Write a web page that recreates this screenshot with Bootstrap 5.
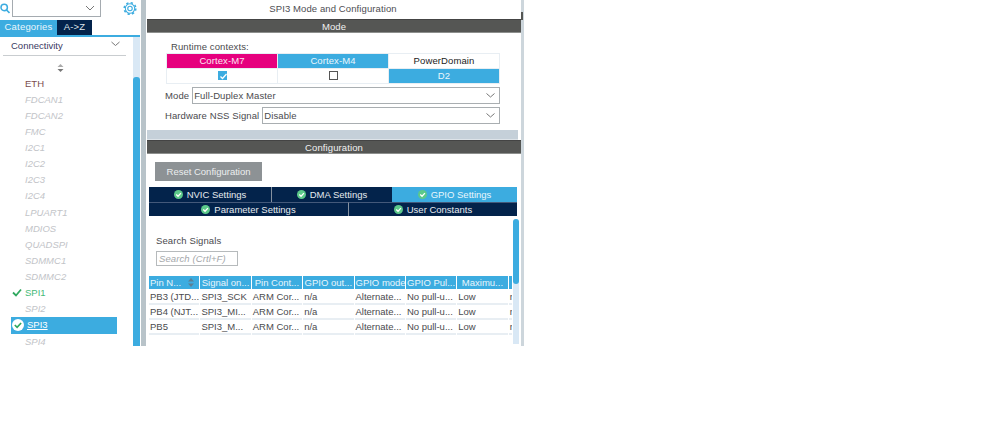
<!DOCTYPE html>
<html lang="en"><head><meta charset="utf-8"><title>SPI3 Mode and Configuration</title>
<link href="https://cdn.jsdelivr.net/npm/bootstrap@5.3.0/dist/css/bootstrap.min.css" rel="stylesheet">
<style>
html,body{background:#fff;margin:0}
body{font-family:"Liberation Sans",Arial,sans-serif;font-size:9.5px;color:#4a4a4e;line-height:1.2;letter-spacing:.1px}
.cube-app{width:524px;height:346px;overflow:hidden;background:#fff}
.side-pane{width:141px;flex:none;height:346px}
.side-top{height:20px;padding-bottom:3px}
.mag{width:10px;margin-top:3px;flex:none}
.combo{width:89px;height:17px;margin:0 0 0 2px;border:1px solid #a5abb0;border-top:0;background:#fff}
.gear{margin-left:22px;margin-top:1px}
.cat-tabs{height:17px;border-bottom:2px solid #3cace0;flex:none;width:140px}
.cat-on{width:57px;height:15px;background:#3cace0;color:#eaf6fc;text-align:center;line-height:14px;letter-spacing:.2px}
.cat-off{width:35px;height:15px;background:#03234b;color:#dfe5ea;text-align:center;line-height:14px}
.side-body{min-height:0;flex:1}
.side-list{width:133px;flex:none}
.group-head{margin:0 7px 0 3px;height:19px;border-bottom:1px solid #c9cdd0;padding:3px 6px 0 8px;color:#39395f;letter-spacing:0}
.sort-mark{height:19.5px;padding-top:8px;padding-left:57px;flex:none}
.ip-list{padding:0;margin:0;list-style:none}
.ip-item{height:16.13px;line-height:15px;padding-left:25px;color:#c2c4c8;font-style:italic;position:relative;letter-spacing:0}
.ip-item.ip-plain{color:#7b4c4f;font-style:normal}
.ip-item.ip-ok{color:#45b978;font-style:normal}
.ip-item.ip-sel{color:#fff;font-style:normal;background:#3cace0;margin-left:11px;width:106px;padding-left:16px;text-decoration:underline;height:17px}
.tick{position:absolute;left:12px;top:3px}
.tick-round{position:absolute;left:1px;top:2px}
.vbar{width:7px;flex:none;background:#d9e8f5;display:flex;flex-direction:column}
.vbar-gap{flex:none;height:40px}
.vbar-thumb{flex:1;background:#3cace0;border-radius:3px 3px 0 0}
.side-rule{width:5px;flex:none;background:#b8c3c9;margin-left:0;height:346px}
.main-pane{width:374px;flex:none;height:346px;margin-left:1px}
.pane-title{height:19px;text-align:center;line-height:17px;color:#4d4d52;padding-right:2px}
.dark-bar{background:#555654;color:#f1f1f1;text-align:center;height:14px;line-height:13px;border-top:1px solid #444;border-bottom:1px solid #8d8f8d}
.mode-box{height:97px;padding-left:19px}
.ctx-label{height:20px;padding:8px 0 0 5px;line-height:12px}
.ctx-table{width:334px;table-layout:fixed;border-collapse:collapse;margin:0;text-align:center;line-height:14px}
.ctx-table td{padding:0;border:1px solid #e8eef3}
.ctx-h{height:15px}
.ctx-c{height:15px}
.ctx-pink{background:#e6007e;color:#fde5f2}
.ctx-blue{background:#3cace0;color:#eaf6fc}
.ctx-dark{color:#222}
.cb{display:inline-block;width:9px;height:9px;vertical-align:-1px;border:1px solid #555}
.cb-on{background:#3cace0;border-color:#3cace0}
.field{height:17px;margin-top:3px;margin-left:-1px;width:335px;color:#4a4a4e}
.field-box{flex:1;border:1px solid #a9aeb1;height:17px;padding-left:1px;line-height:15px;min-width:0;margin-left:3px}
.gap-band{height:10px;background:#c5d0d9;border-bottom:1px solid #dde3e8;margin-right:3px}
.reset-btn{width:107px;height:19px;background:#8d9295;color:#eceeef;border:0;border-radius:0;margin:8px 0 0 8px;padding:0;font-size:9.5px;line-height:17px;letter-spacing:0;display:block}
.set-tabs{margin:6px 0 0 2px;width:368px}
.set-row{height:15px}
.set-cell{background:#03234b;color:#e6ebef;display:flex;align-items:center;justify-content:center;gap:4px;height:15px;letter-spacing:0;border-left:1px solid #8591a0}
.set-cell:first-child{border-left:0}
.set-cell.on{background:#3cace0;color:#e8f6fc;border-left:0}
.set-row + .set-row .set-cell{height:14px;border-top:1px solid #44597a}
.set-w1{width:122px}.set-w2{width:121px}.set-w3{width:125px}.set-w4{width:199px}.set-w5{width:169px}
.sig-area{height:130px}
.sig-main{width:363px;flex:none;margin-left:2px;overflow:hidden}
.sig-label{padding:17px 0 0 7px;line-height:13px;height:30px}
.sig-search{width:82px;height:15px;border:1px solid #b6babc;margin:4px 0 0 7px;color:#a4a7aa;font-style:italic;line-height:13px;padding-left:2px}
.sig-table{table-layout:fixed;border-collapse:separate;border-spacing:1px 0;width:412px;margin:10px 0 0 -1px;line-height:13px;letter-spacing:0}
.sig-table th{background:#3cace0;color:#e8f6fc;font-weight:400;height:14px;padding:0 1px;white-space:nowrap;overflow:hidden;border-bottom:1px solid #fff;position:relative;text-align:center}
.sig-table th:first-child{text-align:left}
.sig-table td{height:14.5px;padding:0 1px;white-space:nowrap;overflow:hidden;border-bottom:2px solid #e8eef3;color:#4a4a4e}
.sig-vbar{width:6px;flex:none;margin-left:1px;height:125px;background:#d9e8f5;border-radius:3px 3px 0 0;margin-top:2px}
.sig-thumb{height:65px;background:#3cace0;border-radius:3px}
.th-sort{position:absolute;right:5px;top:2px}
.far-rule{width:3px;flex:none;background:#cdd6dc;height:346px;margin-left:0;padding-top:12px}
.far-thumb{height:8px;background:#555654;width:2px}
</style></head>
<body>
<div class="cube-app d-flex">
  <div class="side-pane d-flex flex-column">
    <div class="side-top d-flex flex-shrink-0">
      <svg class="mag" width="10" height="12" viewBox="0 0 10 12"><circle cx="4.2" cy="4.5" r="3.2" fill="none" stroke="#3cace0" stroke-width="1.5"/><path d="M6.5 7l3 3" stroke="#3cace0" stroke-width="1.6"/></svg>
      <div class="combo d-flex justify-content-end"><svg width="18" height="15" viewBox="0 0 18 15"><path d="M4 6l4 4 4-4" fill="none" stroke="#777" stroke-width="1"/></svg></div>
      <svg class="gear" width="14" height="15" viewBox="0 0 15 15"><circle cx="7.5" cy="7.5" r="2.4" fill="none" stroke="#3cace0" stroke-width="1.2"/><circle cx="7.5" cy="7.5" r="5" fill="none" stroke="#3cace0" stroke-width="1.1"/><circle cx="7.5" cy="7.5" r="6.200" fill="none" stroke="#3cace0" stroke-width="1.7" stroke-dasharray="2.4 2.47"/></svg>
    </div>
    <div class="cat-tabs d-flex">
      <div class="cat-on">Categories</div><div class="cat-off">A-&gt;Z</div>
    </div>
    <div class="side-body d-flex overflow-hidden">
      <div class="side-list">
        <div class="group-head d-flex justify-content-between"><span>Connectivity</span><svg width="9" height="8" viewBox="0 0 9 8"><path d="M.5 2l4 3.5 4-3.5" fill="none" stroke="#777"/></svg></div>
        <div class="sort-mark"><svg class="d-block" width="7" height="8" viewBox="0 0 7 8"><path d="M3.5 0L6.5 3H.5z" fill="#aaa"/><path d="M3.5 8L.5 5h6z" fill="#777"/></svg></div>
        <ul class="ip-list">
          <li class="ip-item ip-plain">ETH</li>
          <li class="ip-item">FDCAN1</li>
          <li class="ip-item">FDCAN2</li>
          <li class="ip-item">FMC</li>
          <li class="ip-item">I2C1</li>
          <li class="ip-item">I2C2</li>
          <li class="ip-item">I2C3</li>
          <li class="ip-item">I2C4</li>
          <li class="ip-item">LPUART1</li>
          <li class="ip-item">MDIOS</li>
          <li class="ip-item">QUADSPI</li>
          <li class="ip-item">SDMMC1</li>
          <li class="ip-item">SDMMC2</li>
          <li class="ip-item ip-ok"><svg class="tick" width="10" height="9" viewBox="0 0 10 9"><path d="M1 4.5l3 3 5-6" fill="none" stroke="#2fa85f" stroke-width="1.8"/></svg>SPI1</li>
          <li class="ip-item">SPI2</li>
          <li class="ip-item ip-sel"><svg class="tick-round" width="12" height="12" viewBox="0 0 12 12"><circle cx="6" cy="6" r="6" fill="#fff"/><path d="M2.8 6l2.3 2.3 4-4.3" fill="none" stroke="#2fa85f" stroke-width="1.7"/></svg>SPI3</li>
          <li class="ip-item">SPI4</li>
        </ul>
      </div>
      <div class="vbar"><div class="vbar-gap"></div><div class="vbar-thumb"></div></div>
      <div class="flex-grow-1"></div>
    </div>
  </div>
  <div class="side-rule"></div>
  <div class="main-pane">
    <div class="pane-title">SPI3 Mode and Configuration</div>
    <div class="dark-bar">Mode</div>
    <div class="mode-box">
      <div class="ctx-label">Runtime contexts:</div>
      <table class="ctx-table">
        <tr class="ctx-h"><td class="ctx-pink">Cortex-M7</td><td class="ctx-blue">Cortex-M4</td><td class="ctx-dark">PowerDomain</td></tr>
        <tr class="ctx-c"><td><span class="cb cb-on"><svg class="d-block" width="9" height="9" viewBox="0 0 9 9"><path d="M1.5 4.5l2 2 4-4.5" fill="none" stroke="#fff" stroke-width="1.3"/></svg></span></td><td><span class="cb"></span></td><td class="ctx-blue">D2</td></tr>
      </table>
      <div class="field d-flex align-items-center"><span>Mode</span><div class="field-box d-flex justify-content-between"><span>Full-Duplex Master</span><svg class="me-1 mt-1" width="9" height="7" viewBox="0 0 9 7"><path d="M.5 1.5l4 3.5 4-3.5" fill="none" stroke="#777"/></svg></div></div>
      <div class="field d-flex align-items-center"><span>Hardware NSS Signal</span><div class="field-box d-flex justify-content-between"><span>Disable</span><svg class="me-1 mt-1" width="9" height="7" viewBox="0 0 9 7"><path d="M.5 1.5l4 3.5 4-3.5" fill="none" stroke="#777"/></svg></div></div>
    </div>
    <div class="gap-band"></div>
    <div class="dark-bar">Configuration</div>
    <div>
      <button type="button" class="btn reset-btn">Reset Configuration</button>
      <div class="set-tabs">
        <div class="set-row d-flex">
          <div class="set-cell set-w1"><svg width="9" height="9" viewBox="0 0 10 10"><circle cx="5" cy="5" r="5" fill="#5cc98a"/><path d="M2.5 5l2 2 3.2-3.5" fill="none" stroke="#fff" stroke-width="1.4"/></svg>NVIC Settings</div>
          <div class="set-cell set-w2"><svg width="9" height="9" viewBox="0 0 10 10"><circle cx="5" cy="5" r="5" fill="#5cc98a"/><path d="M2.5 5l2 2 3.2-3.5" fill="none" stroke="#fff" stroke-width="1.4"/></svg>DMA Settings</div>
          <div class="set-cell set-w3 on"><svg width="9" height="9" viewBox="0 0 10 10"><circle cx="5" cy="5" r="5" fill="#5cc98a"/><path d="M2.5 5l2 2 3.2-3.5" fill="none" stroke="#fff" stroke-width="1.4"/></svg>GPIO Settings</div>
        </div>
        <div class="set-row d-flex">
          <div class="set-cell set-w4"><svg width="9" height="9" viewBox="0 0 10 10"><circle cx="5" cy="5" r="5" fill="#5cc98a"/><path d="M2.5 5l2 2 3.2-3.5" fill="none" stroke="#fff" stroke-width="1.4"/></svg>Parameter Settings</div>
          <div class="set-cell set-w5"><svg width="9" height="9" viewBox="0 0 10 10"><circle cx="5" cy="5" r="5" fill="#5cc98a"/><path d="M2.5 5l2 2 3.2-3.5" fill="none" stroke="#fff" stroke-width="1.4"/></svg>User Constants</div>
        </div>
      </div>
      <div class="sig-area d-flex">
        <div class="sig-main">
          <div class="sig-label">Search Signals</div>
          <div class="sig-search">Search (Crtl+F)</div>
          <table class="sig-table">
            <thead><tr><th>Pin N...<svg class="th-sort" width="6" height="9" viewBox="0 0 6 9"><path d="M3 0l3 3.5H0z" fill="#5b7f95"/><path d="M3 9L0 5.5h6z" fill="#5b7f95"/></svg></th><th>Signal on...</th><th>Pin Cont...</th><th>GPIO out...</th><th>GPIO mode</th><th>GPIO Pul...</th><th>Maximu...</th><th></th></tr></thead>
            <tbody>
              <tr><td>PB3 (JTD...</td><td>SPI3_SCK</td><td>ARM Cor...</td><td>n/a</td><td>Alternate...</td><td>No pull-u...</td><td>Low</td><td>n/a</td></tr>
              <tr><td>PB4 (NJT...</td><td>SPI3_MI...</td><td>ARM Cor...</td><td>n/a</td><td>Alternate...</td><td>No pull-u...</td><td>Low</td><td>n/a</td></tr>
              <tr><td>PB5</td><td>SPI3_M...</td><td>ARM Cor...</td><td>n/a</td><td>Alternate...</td><td>No pull-u...</td><td>Low</td><td>n/a</td></tr>
            </tbody>
          </table>
        </div>
        <div class="sig-vbar"><div class="sig-thumb"></div></div>
      </div>
    </div>
  </div>
  <div class="far-rule"><div class="far-thumb"></div></div>
</div>
<script src="https://cdn.jsdelivr.net/npm/bootstrap@5.3.0/dist/js/bootstrap.bundle.min.js"></script>
</body></html>
